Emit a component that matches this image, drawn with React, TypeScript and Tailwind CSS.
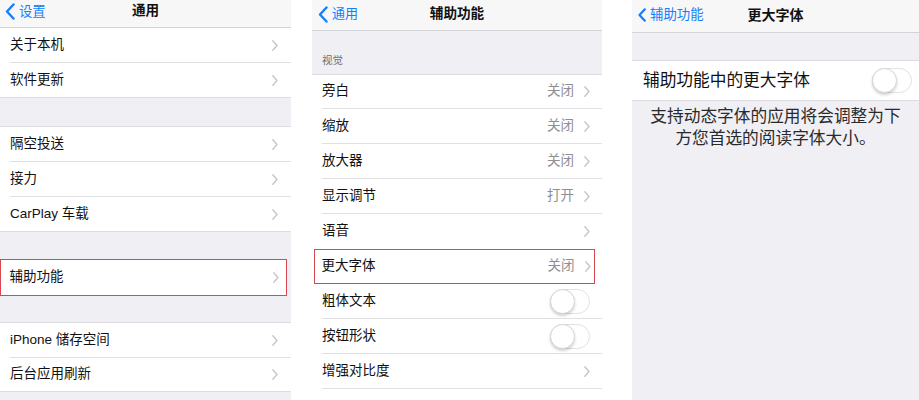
import React from "react";

function Chevron() {
  return (
    <svg width="6" height="11" viewBox="0 0 6 11" className="shrink-0">
      <path d="M0.8 0.8L5 5.5L0.8 10.2" fill="none" stroke="#c4c4c9" strokeWidth="1.3" strokeLinecap="round" strokeLinejoin="round" />
    </svg>
  );
}

function BackChevron({ small }: { small?: boolean }) {
  return small ? (
    <svg width="8" height="14" viewBox="0 0 8 14" className="shrink-0">
      <path d="M6.8 1.3L1.5 7l5.3 5.7" fill="none" stroke="#157efb" strokeWidth="2.2" strokeLinecap="round" strokeLinejoin="round" />
    </svg>
  ) : (
    <svg width="10" height="17" viewBox="0 0 10 17" className="shrink-0">
      <path d="M8.5 1.5L2 8.5l6.5 7" fill="none" stroke="#157efb" strokeWidth="2.4" strokeLinecap="round" strokeLinejoin="round" />
    </svg>
  );
}

function Toggle() {
  return (
    <div className="relative w-[40px] h-[25px] rounded-full border border-[#e2e2e6] bg-white shrink-0">
      <div className="absolute left-[-1px] top-[-1px] w-[25px] h-[25px] rounded-full bg-white border border-[#d6d6da] shadow-[0_2px_3px_rgba(0,0,0,0.18)]" />
    </div>
  );
}

type RowProps = {
  label: string;
  value?: string;
  chevron?: boolean;
  toggle?: boolean;
  h: string;
  sep?: boolean;
  pr: string;
};

function Row({ label, value, chevron = true, toggle, h, sep = true, pr }: RowProps) {
  return (
    <div className={`${h} pl-[10px] bg-white`}>
      <div className={`h-full flex items-center ${pr} ${sep ? "border-b border-[#e0e0e3]" : ""}`}>
        <span className="flex-1 text-[13.5px] text-[#111]">{label}</span>
        {value && <span className="text-[13.5px] text-[#8e8e93] mr-[10px]">{value}</span>}
        {toggle ? <Toggle /> : chevron ? <Chevron /> : null}
      </div>
    </div>
  );
}

export default function App() {
  return (
    <div className="w-[919px] h-[400px] overflow-hidden bg-white flex font-['Liberation_Sans','Noto_Sans_CJK_SC',sans-serif]">
      {/* Panel 1 */}
      <div className="w-[291px] h-full bg-[#efeff4] flex flex-col shrink-0">
        <div className="h-[28px] bg-[#f7f7f7] border-b border-[#d4d4d8] grid grid-cols-[1fr_auto_1fr] items-center pb-[4px]">
          <div className="flex items-center pl-[5px] gap-[4px]">
            <BackChevron />
            <span className="text-[13.3px] text-[#157efb]">设置</span>
          </div>
          <span className="text-[13.6px] font-semibold text-[#111]">通用</span>
          <div />
        </div>
        <div className="border-b border-[#dcdce0]">
          <Row label="关于本机" h="h-[35px]" pr="pr-[13px]" />
          <Row label="软件更新" h="h-[34px]" pr="pr-[13px]" sep={false} />
        </div>
        <div className="h-[28px]" />
        <div className="border-y border-[#dcdce0]">
          <Row label="隔空投送" h="h-[35px]" pr="pr-[13px]" />
          <Row label="接力" h="h-[35px]" pr="pr-[13px]" />
          <Row label="CarPlay 车载" h="h-[34px]" pr="pr-[13px]" sep={false} />
        </div>
        <div className="h-[27px]" />
        <div className="h-[37px] mr-[4px] bg-white border-[1.5px] border-[#d9484f] pl-[8.5px] pr-[7.5px] flex items-center">
          <span className="flex-1 text-[13.5px] text-[#111]">辅助功能</span>
          <Chevron />
        </div>
        <div className="h-[26px]" />
        <div className="border-y border-[#dcdce0]">
          <Row label="iPhone 储存空间" h="h-[35px]" pr="pr-[13px]" />
          <Row label="后台应用刷新" h="h-[33px]" pr="pr-[13px]" sep={false} />
        </div>
      </div>

      <div className="w-[21px] shrink-0" />

      {/* Panel 2 */}
      <div className="w-[290px] h-full bg-white flex flex-col shrink-0">
        <div className="h-[31px] bg-[#f7f7f7] border-b border-[#d4d4d8] grid grid-cols-[1fr_auto_1fr] items-center pb-[2px]">
          <div className="flex items-center pl-[6px] gap-[4px]">
            <BackChevron />
            <span className="text-[13px] text-[#157efb]">通用</span>
          </div>
          <span className="text-[13.6px] font-semibold text-[#111]">辅助功能</span>
          <div />
        </div>
        <div className="h-[44px] bg-[#efeff4] border-b border-[#dcdce0] flex items-end pl-[10px] pb-[5px]">
          <span className="text-[10.5px] text-[#6d6d72]">视觉</span>
        </div>
        <Row label="旁白" value="关闭" h="h-[34px]" pr="pr-[12px]" />
        <Row label="缩放" value="关闭" h="h-[35px]" pr="pr-[12px]" />
        <Row label="放大器" value="关闭" h="h-[35px]" pr="pr-[12px]" />
        <Row label="显示调节" value="打开" h="h-[35px]" pr="pr-[12px]" />
        <Row label="语音" h="h-[35px]" pr="pr-[12px]" sep={false} />
        <div className="h-[35px] ml-[2px] mr-[7px] bg-white border-[1.5px] border-[#d9484f] pl-[6.5px] pr-[3.5px] flex items-center">
          <span className="flex-1 text-[13.5px] text-[#111]">更大字体</span>
          <span className="text-[13.5px] text-[#8e8e93] mr-[10px]">关闭</span>
          <Chevron />
        </div>
        <Row label="粗体文本" toggle h="h-[35px]" pr="pr-[12px]" />
        <Row label="按钮形状" toggle h="h-[35px]" pr="pr-[12px]" />
        <Row label="增强对比度" h="h-[35px]" pr="pr-[12px]" />
        <div className="flex-1 bg-white" />
      </div>

      <div className="w-[30px] shrink-0" />

      {/* Panel 3 */}
      <div className="w-[287px] h-full bg-[#efeff4] flex flex-col shrink-0">
        <div className="h-[33px] bg-[#f7f7f7] border-b border-[#d4d4d8] grid grid-cols-[1fr_auto_1fr] items-center pb-[2px]">
          <div className="flex items-center pl-[6px] gap-[4px]">
            <BackChevron small />
            <span className="text-[13.4px] text-[#157efb]">辅助功能</span>
          </div>
          <span className="text-[14px] font-semibold text-[#111]">更大字体</span>
          <div />
        </div>
        <div className="h-[27px]" />
        <div className="h-[41px] bg-white border-y border-[#dcdce0] pl-[11px] pr-[7px] flex items-center">
          <span className="flex-1 text-[16.7px] text-[#111]">辅助功能中的更大字体</span>
          <Toggle />
        </div>
        <div className="pt-[5px] text-center text-[16.7px] leading-[22px] text-[#2a2a2a] whitespace-nowrap">
          支持动态字体的应用将会调整为下
          <br />
          方您首选的阅读字体大小。
        </div>
      </div>
    </div>
  );
}
